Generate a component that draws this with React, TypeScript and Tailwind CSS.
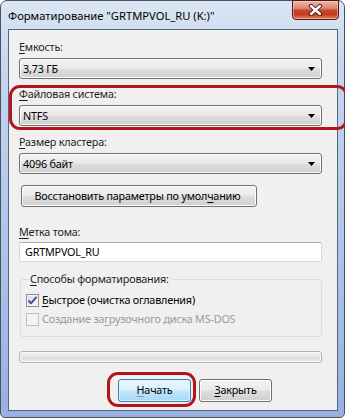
import React from "react";

function Arrow() {
  return (
    <svg width="7" height="4" viewBox="0 0 7 4">
      <path d="M0 0H7L3.5 4Z" fill="#000" />
    </svg>
  );
}

function Combo({ value }: { value: string }) {
  return (
    <div className="w-[303px] h-[21px] flex items-center justify-between pl-[3px] pr-[6px] rounded-[3px] border border-[#707070] bg-[linear-gradient(#f3f3f3_0%,#ebebeb_45%,#dddddd_55%,#d0d0d0_100%)] shadow-[inset_0_0_0_1px_#fbfbfb]">
      <span className="leading-[15px]">{value}</span>
      <Arrow />
    </div>
  );
}

function Label({ pre, u, post }: { pre?: string; u: string; post: string }) {
  return (
    <div className="h-[15px] leading-[15px] text-[#1e1e1e] whitespace-nowrap">
      {pre}
      <span className="underline underline-offset-[2px] decoration-[1px]">{u}</span>
      {post}
    </div>
  );
}

function Button({
  children,
  w,
  def,
}: {
  children: React.ReactNode;
  w: string;
  def?: boolean;
}) {
  return (
    <div
      className={
        def
          ? `${w} h-[23px] flex items-center justify-center rounded-[3px] border border-[#3c7fb1] bg-[linear-gradient(#eaf6fd_0%,#d9f0fc_45%,#bee6fd_55%,#a7d9f5_100%)] shadow-[inset_0_0_0_1px_#dff3fd]`
          : `${w} h-[23px] flex items-center justify-center rounded-[3px] border border-[#707070] bg-[linear-gradient(#f2f2f2_0%,#ebebeb_45%,#dddddd_55%,#cfcfcf_100%)] shadow-[inset_0_0_0_1px_#fcfcfc]`
      }
    >
      {children}
    </div>
  );
}

function CheckBox({ checked, disabled }: { checked?: boolean; disabled?: boolean }) {
  return (
    <div
      className={
        disabled
          ? "w-[13px] h-[13px] border border-[#c0c0c0] bg-[#f4f4f4] shrink-0"
          : "w-[13px] h-[13px] border border-[#8e8f8f] bg-[linear-gradient(135deg,#d7dadf_0%,#f0f0f0_60%,#fbfbfb_100%)] shadow-[inset_0_0_0_1px_#f4f4f4] shrink-0 flex items-center justify-center"
      }
    >
      {checked && (
        <svg width="11" height="11" viewBox="0 0 11 11">
          <path
            d="M1.5 5.5L4 8.3L9.5 1.8"
            fill="none"
            stroke="#3f5590"
            strokeWidth="2"
            strokeLinejoin="round"
          />
        </svg>
      )}
    </div>
  );
}

export default function App() {
  return (
    <div className="w-[345px] h-[418px] bg-white font-['Noto_Sans','Open_Sans',sans-serif] text-[10.8px] tracking-[-0.2px] text-black">
      <div className="relative w-[345px] h-[418px] rounded-t-[7px] rounded-b-[5px] border border-[#4a5160] bg-[linear-gradient(180deg,#dbe6f3_0%,#c6d7ee_15%,#b3c8ea_50%,#97b0e2_100%)] flex flex-col pl-[7px] pr-[6px] pb-[6px]">
        <div className="h-[28px] flex items-center pt-[3px] text-[11.2px] tracking-normal text-[#000] whitespace-nowrap">
          Форматирование "GRTMPVOL_RU (K:)"
        </div>
        <div className="absolute top-[-1px] right-[5px] w-[47px] h-[20px] rounded-b-[4px] border border-[#4b1a12] bg-[linear-gradient(180deg,#eeb4a6_0%,#df8672_40%,#cc442b_52%,#c53a22_75%,#e4805e_100%)] shadow-[inset_0_0_0_1px_rgba(255,220,210,0.5)] flex items-center justify-center">
          <svg width="15" height="12" viewBox="0 0 15 12">
            <path d="M3 2L12 10M12 2L3 10" stroke="#3a1a14" strokeWidth="4.2" strokeLinecap="round" />
            <path d="M3 2L12 10M12 2L3 10" stroke="#fff" strokeWidth="2.4" strokeLinecap="round" />
          </svg>
        </div>
        <div className="flex-1 border border-[#56657a] bg-[#f0f0f0] flex flex-col pl-[10px] pt-[9px]">
          <Label u="Е" post="мкость:" />
          <div className="mt-[4px]">
            <Combo value="3,73 ГБ" />
          </div>

          <div className="relative mt-[7px]">
            <Label u="Ф" post="айловая система:" />
            <div className="mt-[4px]">
              <Combo value="NTFS" />
            </div>
            <div className="absolute left-[-10px] right-[-11px] top-[-1px] bottom-[-4px] border-[3px] border-[#b1161c] rounded-[11px] pointer-events-none" />
          </div>

          <div className="mt-[8px]">
            <Label u="Р" post="азмер кластера:" />
          </div>
          <div className="mt-[4px]">
            <Combo value="4096 байт" />
          </div>

          <div className="mt-[11px] ml-[2px]">
            <div className="w-[236px] h-[22px] flex items-center justify-center rounded-[3px] border border-[#707070] bg-[linear-gradient(#f2f2f2_0%,#ebebeb_45%,#dddddd_55%,#cfcfcf_100%)] shadow-[inset_0_0_0_1px_#fcfcfc] whitespace-nowrap pr-[3px]">
              <span>
                Восстановить параметры по умол
                <span className="underline underline-offset-[2px]">ч</span>
                анию
              </span>
            </div>
          </div>

          <div className="mt-[17px]">
            <Label u="М" post="етка тома:" />
          </div>
          <div className="mt-[3px] w-[303px] h-[20px] rounded-[2px] border border-[#d5d9de] border-t-[#abadb3] bg-white flex items-center pl-[5px]">
            GRTMPVOL_RU
          </div>

          <div className="mt-[17px] ml-[1px] w-[302px] h-[58px] rounded-[3px] border border-[#d5dfe5] flex flex-col pl-[5px]">
            <div className="mt-[-9px] ml-[2px] self-start px-[2px] bg-[#f0f0f0] h-[15px] leading-[15px] text-[#1e1e1e] whitespace-nowrap">
              <span className="underline underline-offset-[2px]">С</span>пособы форматирования:
            </div>
            <div className="mt-[7px] flex items-center gap-[3px] h-[15px] whitespace-nowrap">
              <CheckBox checked />
              <span>
                <span className="underline underline-offset-[2px]">Б</span>ыстрое (очистка оглавления)
              </span>
            </div>
            <div className="mt-[4px] flex items-center gap-[3px] h-[15px] text-[#9a9a9a] whitespace-nowrap">
              <CheckBox disabled />
              <span>
                Создание за<span className="underline underline-offset-[2px]">г</span>рузочного диска MS-DOS
              </span>
            </div>
          </div>

          <div className="mt-[14px] w-[303px] h-[12px] rounded-[3px] border border-[#b2b2b2] bg-[linear-gradient(#f4f4f4_0%,#e6e6e6_50%,#dcdcdc_51%,#e9e9e9_100%)] shadow-[inset_0_0_0_1px_#fafafa]" />

          <div className="mt-[16px] ml-[99px] flex gap-[8px]">
            <div className="relative">
              <Button w="w-[73px]" def>
                <span>
                  <span className="underline underline-offset-[2px] decoration-[#999]">Н</span>ачать
                </span>
              </Button>
              <div className="absolute left-[-11px] right-[-5px] top-[-7px] bottom-[-5px] border-[3px] border-[#b1161c] rounded-[11px] pointer-events-none" />
            </div>
            <Button w="w-[73px]">
              <span>
                <span className="underline underline-offset-[2px]">З</span>акрыть
              </span>
            </Button>
          </div>
        </div>
      </div>
    </div>
  );
}
